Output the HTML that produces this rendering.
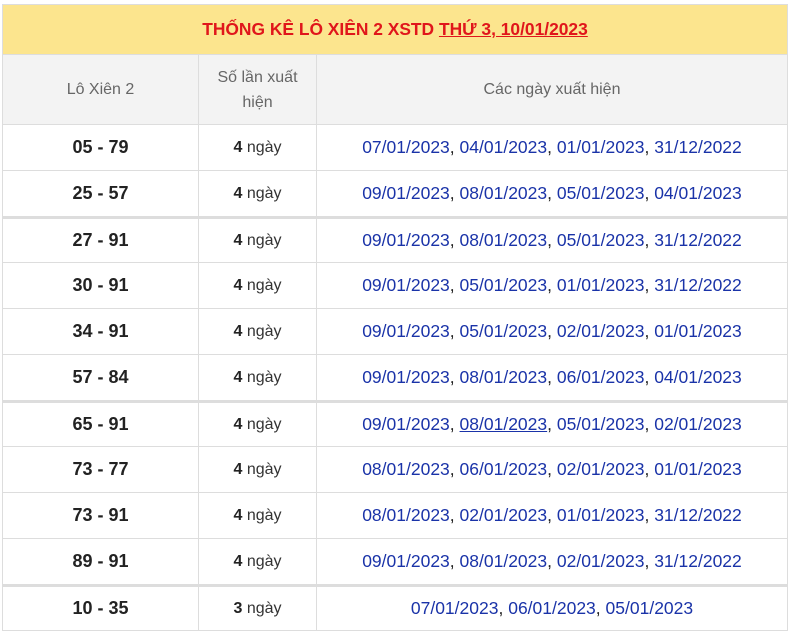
<!DOCTYPE html>
<html><head><meta charset="utf-8"><style>
body{margin:0;background:#fff;font-family:"Liberation Sans",Arial,sans-serif;}
.w{position:absolute;left:2px;top:4px;width:786px;}
table{border-collapse:collapse;width:786px;table-layout:fixed;}
td,th{border:1px solid #ddd;text-align:center;padding:0;}
.t{background:#fce58e;height:49px;color:#e0161b;font-weight:bold;font-size:17.4px;}
.t u{text-decoration:underline;}
.h th{background:#f3f3f3;color:#666;font-weight:normal;font-size:16px;height:69px;line-height:25px;}
tr.r td{height:45px;}
tr.g td{border-top:3px solid #ddd;height:43px;}
.a{font-weight:bold;font-size:18px;color:#222;}
.b{font-size:16px;color:#333;}
.b b{color:#222;}
.c{font-size:17.5px;color:#1a33a8;}
.c span{color:#222;}
</style></head><body><div class="w"><table>
<colgroup><col style="width:196px"><col style="width:118px"><col></colgroup>
<tr><td colspan="3" class="t">THỐNG KÊ LÔ XIÊN 2 XSTD <u>THỨ 3, 10/01/2023</u></td></tr>
<tr class="h"><th>Lô Xiên 2</th><th>Số lần xuất<br>hiện</th><th>Các ngày xuất hiện</th></tr>
<tr class="r"><td class="a">05 - 79</td><td class="b"><b>4</b> ngày</td><td class="c">07/01/2023<span>,</span> 04/01/2023<span>,</span> 01/01/2023<span>,</span> 31/12/2022</td></tr>
<tr class="r"><td class="a">25 - 57</td><td class="b"><b>4</b> ngày</td><td class="c">09/01/2023<span>,</span> 08/01/2023<span>,</span> 05/01/2023<span>,</span> 04/01/2023</td></tr>
<tr class="r g"><td class="a">27 - 91</td><td class="b"><b>4</b> ngày</td><td class="c">09/01/2023<span>,</span> 08/01/2023<span>,</span> 05/01/2023<span>,</span> 31/12/2022</td></tr>
<tr class="r"><td class="a">30 - 91</td><td class="b"><b>4</b> ngày</td><td class="c">09/01/2023<span>,</span> 05/01/2023<span>,</span> 01/01/2023<span>,</span> 31/12/2022</td></tr>
<tr class="r"><td class="a">34 - 91</td><td class="b"><b>4</b> ngày</td><td class="c">09/01/2023<span>,</span> 05/01/2023<span>,</span> 02/01/2023<span>,</span> 01/01/2023</td></tr>
<tr class="r"><td class="a">57 - 84</td><td class="b"><b>4</b> ngày</td><td class="c">09/01/2023<span>,</span> 08/01/2023<span>,</span> 06/01/2023<span>,</span> 04/01/2023</td></tr>
<tr class="r g"><td class="a">65 - 91</td><td class="b"><b>4</b> ngày</td><td class="c">09/01/2023<span>,</span> <u>08/01/2023</u><span>,</span> 05/01/2023<span>,</span> 02/01/2023</td></tr>
<tr class="r"><td class="a">73 - 77</td><td class="b"><b>4</b> ngày</td><td class="c">08/01/2023<span>,</span> 06/01/2023<span>,</span> 02/01/2023<span>,</span> 01/01/2023</td></tr>
<tr class="r"><td class="a">73 - 91</td><td class="b"><b>4</b> ngày</td><td class="c">08/01/2023<span>,</span> 02/01/2023<span>,</span> 01/01/2023<span>,</span> 31/12/2022</td></tr>
<tr class="r"><td class="a">89 - 91</td><td class="b"><b>4</b> ngày</td><td class="c">09/01/2023<span>,</span> 08/01/2023<span>,</span> 02/01/2023<span>,</span> 31/12/2022</td></tr>
<tr class="r g"><td class="a">10 - 35</td><td class="b"><b>3</b> ngày</td><td class="c">07/01/2023<span>,</span> 06/01/2023<span>,</span> 05/01/2023</td></tr>
</table></div></body></html>
